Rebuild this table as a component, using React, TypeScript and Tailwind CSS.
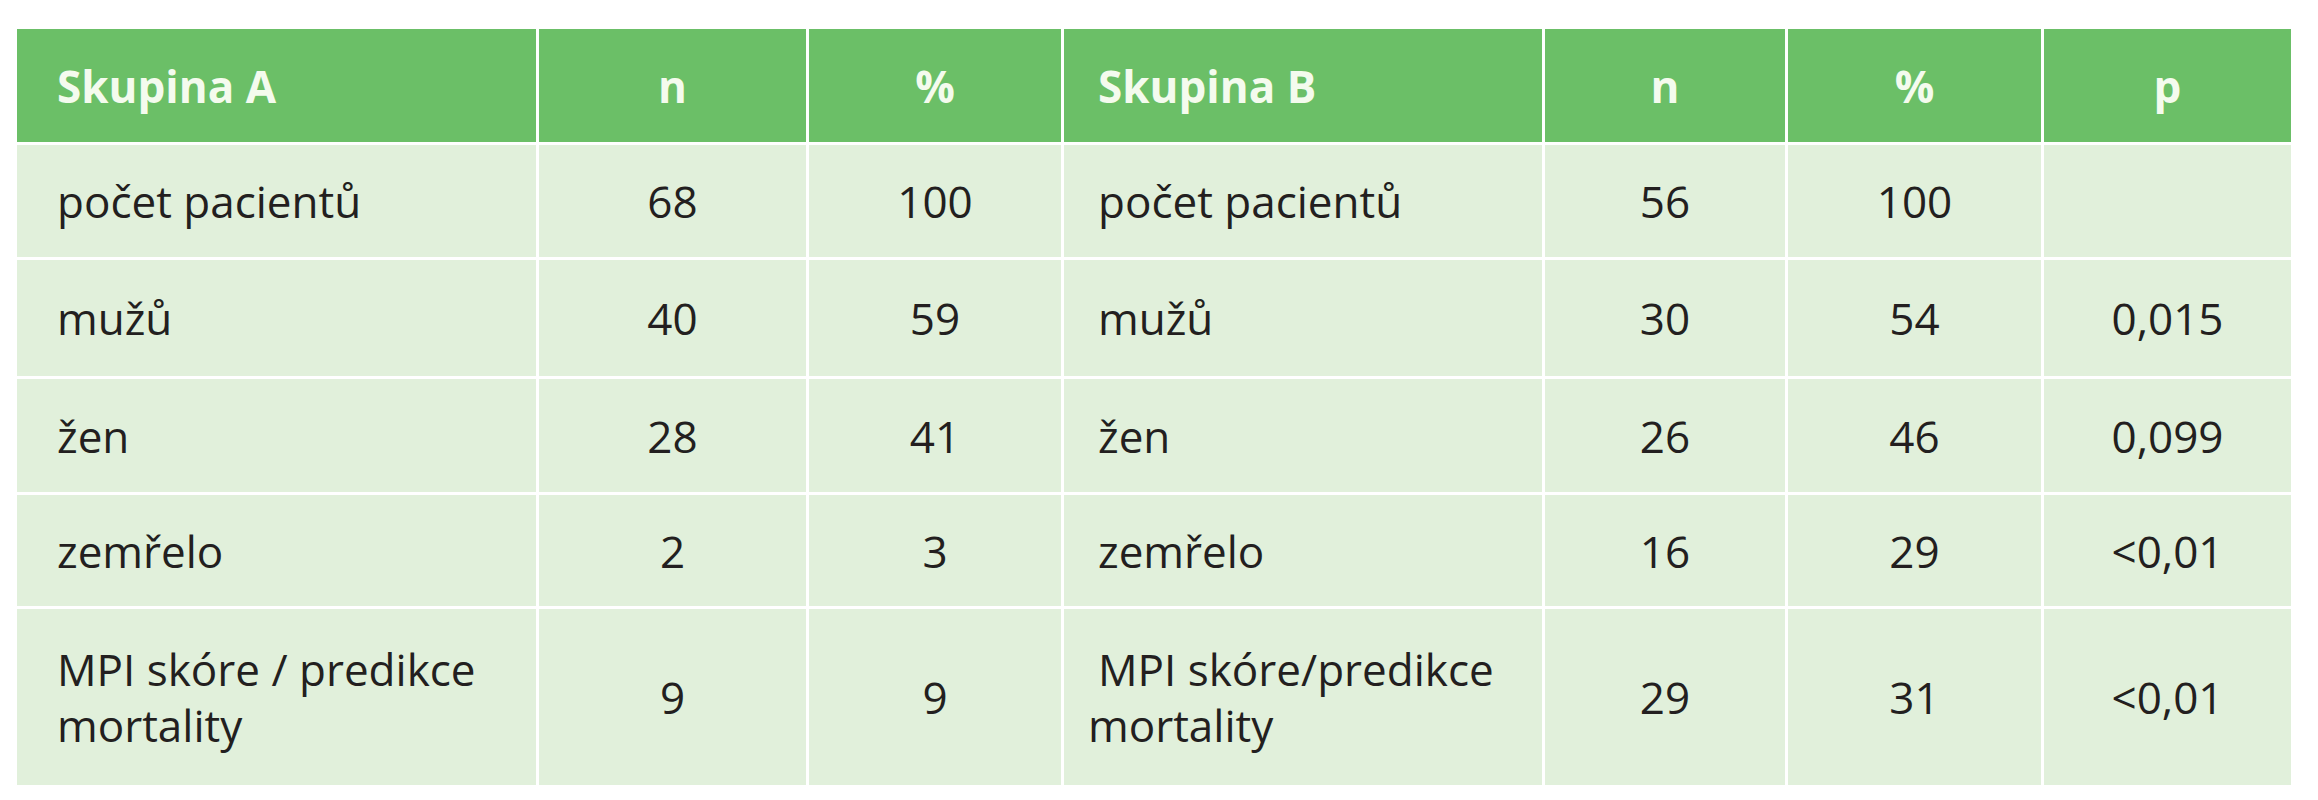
const header = ["Skupina A", "n", "%", "Skupina B", "n", "%", "p"];

type Row = {
  labelA: string[];
  nA: string;
  pctA: string;
  labelB: string[];
  nB: string;
  pctB: string;
  p: string;
};

const rows: Row[] = [
  { labelA: ["počet pacientů"], nA: "68", pctA: "100", labelB: ["počet pacientů"], nB: "56", pctB: "100", p: "" },
  { labelA: ["mužů"], nA: "40", pctA: "59", labelB: ["mužů"], nB: "30", pctB: "54", p: "0,015" },
  { labelA: ["žen"], nA: "28", pctA: "41", labelB: ["žen"], nB: "26", pctB: "46", p: "0,099" },
  { labelA: ["zemřelo"], nA: "2", pctA: "3", labelB: ["zemřelo"], nB: "16", pctB: "29", p: "<0,01" },
  {
    labelA: ["MPI skóre / predikce", "mortality"],
    nA: "9",
    pctA: "9",
    labelB: ["MPI skóre/predikce mortality"],
    nB: "29",
    pctB: "31",
    p: "<0,01",
  },
];

function Cell({ children, left, b }: { children?: React.ReactNode; left?: boolean; b?: boolean }) {
  return (
    <div
      className={
        "flex items-center bg-[#e1f0db] text-[44px] leading-[56px] text-[#231f20] " +
        (left ? (b ? "pl-[24px] pr-2 indent-[10px]" : "pl-[40px] pr-2") : "justify-center")
      }
    >
      <div>{children}</div>
    </div>
  );
}

export default function App() {
  return (
    <div className="min-h-[800px] bg-white pt-[29px] pl-[17px]" style={{ fontFamily: '"Open Sans", "Noto Sans", sans-serif' }}>
      <div className="grid w-[2274px] grid-cols-[519px_267px_252px_478px_240px_253px_247px] grid-rows-[113px_112px_116px_113px_111px_176px] gap-[3px]">
        {header.map((h, i) => (
          <div
            key={i}
            className={
              "flex items-center bg-[#6bbf67] text-[44px] font-bold text-[#f4fbee] " +
              (i === 0 ? "pl-[40px]" : i === 3 ? "pl-[34px]" : "justify-center")
            }
          >
            {h}
          </div>
        ))}
        {rows.map((r, i) => (
          <div key={i} className="contents">
            <Cell left>
              {r.labelA.map((l, j) => (
                <div key={j}>{l}</div>
              ))}
            </Cell>
            <Cell>{r.nA}</Cell>
            <Cell>{r.pctA}</Cell>
            <Cell left b>
              {r.labelB.join(" ")}
            </Cell>
            <Cell>{r.nB}</Cell>
            <Cell>{r.pctB}</Cell>
            <Cell>{r.p}</Cell>
          </div>
        ))}
      </div>
    </div>
  );
}
